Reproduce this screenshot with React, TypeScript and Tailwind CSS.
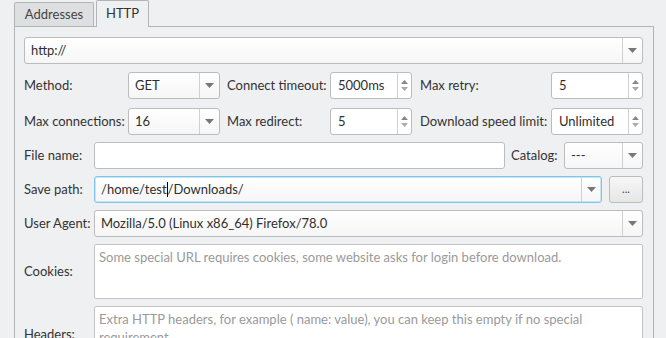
import React from "react";

const font = { fontFamily: "Lato, 'Noto Sans', sans-serif" };

function Arrow() {
  return (
    <svg width="9" height="5" viewBox="0 0 9 5">
      <path d="M0 0 L9 0 L4.5 5 Z" fill="#777" />
    </svg>
  );
}

function Combo({ children, className = "", focused = false }: { children: React.ReactNode; className?: string; focused?: boolean }) {
  return (
    <div
      className={`flex h-[27px] items-stretch rounded-[3px] border bg-gradient-to-b from-white to-[#f6f6f6] ${
        focused ? "border-[#7fc6ea] shadow-[inset_0_0_0_1px_#c6e6f6]" : "border-[#bcbcbc]"
      } ${className}`}
    >
      <div className="flex flex-1 items-center pl-[6px] text-[13px] text-[#2f2f2f] whitespace-nowrap overflow-hidden">{children}</div>
      <div className="flex w-[20px] items-center justify-center border-l border-[#d0d0d0]">
        <Arrow />
      </div>
    </div>
  );
}

function Spin({ value, className = "" }: { value: string; className?: string }) {
  return (
    <div className={`flex h-[27px] items-stretch rounded-[3px] border border-[#bcbcbc] bg-white ${className}`}>
      <div className="flex flex-1 items-center pl-[7px] text-[13px] text-[#2f2f2f] whitespace-nowrap">{value}</div>
      <div className="flex w-[14px] flex-col items-center justify-center gap-[3px] border-l border-[#d0d0d0]">
        <svg width="7" height="4" viewBox="0 0 7 4">
          <path d="M0 4 L7 4 L3.5 0 Z" fill="#888" />
        </svg>
        <svg width="7" height="4" viewBox="0 0 7 4">
          <path d="M0 0 L7 0 L3.5 4 Z" fill="#aaa" />
        </svg>
      </div>
    </div>
  );
}

function Label({ children, className = "" }: { children: React.ReactNode; className?: string }) {
  return <div className={`flex items-center text-[13px] text-[#333] whitespace-nowrap ${className}`}>{children}</div>;
}

export default function App() {
  return (
    <div className="h-[338px] w-[666px] overflow-hidden bg-[#eff0f1]" style={font}>
      <div className="pl-[14px]">
        <div className="flex h-[26px] items-end">
          <div className="flex h-[24px] w-[80px] items-center justify-center rounded-t-[2px] border border-b-0 border-[#b4b4b4] bg-[#dedfe0] text-[13px] text-[#444]">
            Addresses
          </div>
          <div className="relative z-10 ml-[2px] flex h-[27px] w-[53px] translate-y-[1px] items-center justify-center rounded-t-[2px] border border-b-0 border-[#b4b4b4] bg-[#eff0f1] pb-[1px] text-[13px] text-[#333]">
            HTTP
          </div>
        </div>
        <div className="h-[320px] w-[640px] border border-[#b4b4b4] px-[9px] pt-[10px]">
          <Combo className="w-[619px]">http://</Combo>
          <div className="mt-[8px] grid grid-cols-[104px_92px_110px_82px_139px_92px] gap-y-[9px]">
            <Label>Method:</Label>
            <Combo>GET</Combo>
            <Label className="pl-[7px]">Connect timeout:</Label>
            <Spin value="5000ms" />
            <Label className="pl-[8px]">Max retry:</Label>
            <Spin value="5" />
            <Label>Max connections:</Label>
            <Combo>16</Combo>
            <Label className="pl-[7px]">Max redirect:</Label>
            <Spin value="5" />
            <Label className="pl-[8px]">Download speed limit:</Label>
            <Spin value="Unlimited" />
          </div>
          <div className="mt-[7px] flex h-[27px]">
            <Label className="w-[70px]">File name:</Label>
            <div className="h-[27px] w-[411px] rounded-[3px] border border-[#bcbcbc] bg-white" />
            <Label className="w-[59px] pl-[6px]">Catalog:</Label>
            <Combo className="w-[79px]">---</Combo>
          </div>
          <div className="mt-[7px] flex h-[27px]">
            <Label className="w-[70px]">Save path:</Label>
            <Combo focused className="w-[508px]">
              <span>/home/test</span>
              <span className="inline-block h-[15px] w-px bg-black" />
              <span>/Downloads/</span>
            </Combo>
            <div className="ml-[7px] flex h-[27px] w-[34px] items-center justify-center rounded-[3px] border border-[#bcbcbc] bg-gradient-to-b from-[#f7f7f7] to-[#e6e6e6] text-[11px] text-[#444]">
              ...
            </div>
          </div>
          <div className="mt-[7px] flex h-[27px]">
            <Label className="w-[70px]">User Agent:</Label>
            <Combo className="w-[549px]">Mozilla/5.0 (Linux x86_64) Firefox/78.0</Combo>
          </div>
          <div className="mt-[7px] flex h-[55px]">
            <Label className="w-[70px]">Cookies:</Label>
            <div className="w-[549px] rounded-[2px] border border-[#c4c4c4] bg-white px-[4px] pt-[3px] text-[13px] text-[#9a9a9a]">
              Some special URL requires cookies, some website asks for login before download.
            </div>
          </div>
          <div className="mt-[7px] flex h-[55px]">
            <Label className="w-[70px] pt-[3px]">Headers:</Label>
            <div className="w-[549px] rounded-[2px] border border-[#c4c4c4] bg-white px-[4px] pt-[3px] text-[13px] leading-[18px] text-[#9a9a9a]">
              Extra HTTP headers, for example ( name: value), you can keep this empty if no special requirement.
            </div>
          </div>
        </div>
      </div>
    </div>
  );
}
